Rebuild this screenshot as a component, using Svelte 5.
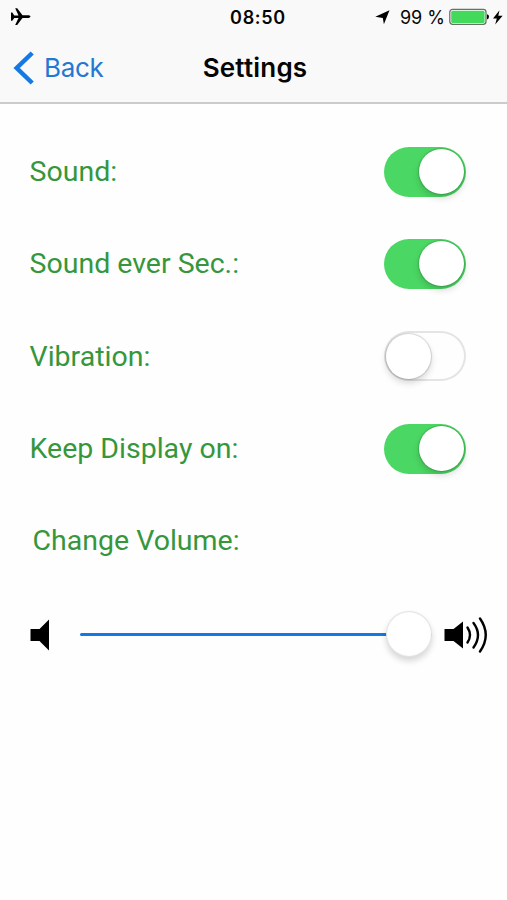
<script>
	let options = $state([
		{ label: 'Sound:', on: true },
		{ label: 'Sound ever Sec.:', on: true },
		{ label: 'Vibration:', on: false },
		{ label: 'Keep Display on:', on: true }
	]);
	let volume = $state(100);
</script>

<div class="screen">
	<header>
		<div class="status">
			<svg width="20" height="18" viewBox="0 0 20 18">
				<path
					d="M0 4.5h1.3l2 3h4.2L4.2.3h2l5.3 6.9 6.2.1q1.8.4 1.8 1.3t-1.8 1.3l-6.2.1-5.3 6.9h-2L7.5 10H3.300l-2 2.800H0z" />
			</svg>
			<span class="time">08:50</span>
			<div class="power">
				<svg width="15" height="15" viewBox="0 0 15 15">
					<path d="M14.5.3 8.900 14.300 7.800 8 .3 6.800z" />
				</svg>
				<span class="percent">99 %</span>
				<svg width="41" height="18" viewBox="0 0 41 18">
					<rect x=".8" y="1.3" width="36.2" height="15" rx="2.8" fill="#fff" stroke="#657267" stroke-width="1.3" />
					<rect x="2.2" y="2.7" width="33.4" height="12.2" rx="1.5" fill="#43d95b" />
					<path d="M38 6.2q2 .3 2 2.6t-2 2.6z" />
				</svg>
				<svg class="bolt" width="10" height="15" viewBox="0 0 10 15">
					<path d="M6.5.3 0 8.4h3.8L2.2 14.5 9.6 5.7H5.3z" />
				</svg>
			</div>
		</div>
		<nav>
			<button class="back">
				<svg width="21" height="34" viewBox="0 0 21 34">
					<path d="M19.2 2 3.7 17l15.5 15" fill="none" stroke="#1479e4" stroke-width="4.5" />
				</svg>
				<span>Back</span>
			</button>
			<h1>Settings</h1>
		</nav>
	</header>

	<main>
		{#each options as option}
			<div class="row">
				<span class="label">{option.label}</span>
				<button
					class="switch"
					class:on={option.on}
					role="switch"
					aria-checked={option.on}
					aria-label={option.label}
					onclick={() => (option.on = !option.on)}>
					<span class="knob"></span>
				</button>
			</div>
		{/each}
		<div class="row heading">
			<span class="label">Change Volume:</span>
		</div>
		<div class="volume">
			<svg width="20" height="32" viewBox="0 0 20 32">
				<path d="M.5 10h9L19 .5v31L9.5 22h-9z" />
			</svg>
			<input type="range" min="0" max="100" aria-label="Volume" bind:value={volume} style:--level="{volume}%" />
			<svg width="44" height="38" viewBox="0 0 44 38">
				<path d="M.5 13h9L19 5.5v27L9.5 25h-9z" />
				<g fill="none" stroke="#000" stroke-width="2.4" stroke-linecap="round">
					<path d="M23.5 11.5q5 7.500 0 15" />
					<path d="M29.5 7q9 12 0 24.500" />
					<path d="M36 2.5q11.500 16.500 0 33" />
				</g>
			</svg>
		</div>
	</main>
</div>

<style>
	:global(body) {
		background: #fefefe;
	}

	.screen {
		width: 507px;
		height: 900px;
		overflow: hidden;
		background: #fefefe;
		color: #050505;
		font-family: Inter, 'Liberation Sans', sans-serif;
	}

	button {
		border: 0;
		padding: 0;
		background: none;
		font: inherit;
		cursor: pointer;
	}

	svg {
		display: block;
		flex: none;
	}

	header {
		box-sizing: border-box;
		height: 104px;
		background: #f9f9f9;
		border-bottom: 2px solid #cbcbcb;
	}

	.status {
		display: grid;
		grid-template-columns: 1fr auto 1fr;
		align-items: center;
		height: 34px;
		padding: 0 4px 0 11px;
	}

	.time {
		font-size: 18px;
		font-weight: 600;
		letter-spacing: 0.7px;
		transform: translateX(1px);
	}

	.power {
		display: flex;
		align-items: center;
		justify-content: flex-end;
	}

	.percent {
		margin: 0 4px 0 10px;
		font-size: 18px;
		white-space: nowrap;
	}

	.bolt {
		margin-left: 3px;
	}

	nav {
		display: grid;
		grid-template-columns: 1fr auto 1fr;
		align-items: center;
		height: 68px;
		padding: 0 10px 0 13px;
	}

	.back {
		display: flex;
		align-items: center;
		gap: 10px;
		color: #2478d2;
		font-size: 26px;
		letter-spacing: -0.3px;
		line-height: 32px;
	}

	h1 {
		margin: 0;
		font-size: 26px;
		font-weight: 600;
		letter-spacing: 0.2px;
		line-height: 32px;
	}

	main {
		padding-top: 21.5px;
	}

	.row {
		display: flex;
		align-items: center;
		justify-content: space-between;
		height: 92.3px;
		padding: 0 41px 0 29.5px;
	}

	.heading {
		padding-left: 32.5px;
	}

	.label {
		color: #36963c;
		font-family: Roboto, sans-serif;
		font-size: 28.5px;
	}

	.switch {
		display: flex;
		align-items: center;
		box-sizing: border-box;
		width: 82px;
		height: 50px;
		padding: 0 2px;
		border-radius: 25px;
		box-shadow: inset 0 0 0 2px #e4e4e4;
	}

	.switch.on {
		justify-content: flex-end;
		background: #4bd763;
		box-shadow: none;
	}

	.knob {
		width: 45px;
		height: 45px;
		border-radius: 50%;
		background: #fff;
		box-shadow:
			0 0 1px 1px rgba(0, 0, 0, 0.14),
			0 4px 7px rgba(0, 0, 0, 0.16);
	}

	.volume {
		display: flex;
		align-items: center;
		height: 96px;
		padding: 0 19px 0 30px;
	}

	input {
		appearance: none;
		flex: 1;
		min-width: 0;
		height: 46px;
		margin: 0 12px 0 30px;
		background: none;
	}

	input::-webkit-slider-runnable-track {
		height: 3px;
		border-radius: 2px;
		background: linear-gradient(to right, #1378e2 var(--level), #b7b7b7 var(--level));
	}

	input::-webkit-slider-thumb {
		appearance: none;
		width: 46px;
		height: 46px;
		margin-top: -22.5px;
		border-radius: 50%;
		background: #fff;
		box-shadow:
			inset 0 0 1px 1px rgba(0, 0, 0, 0.12),
			0 4px 6px rgba(0, 0, 0, 0.16);
	}
</style>
